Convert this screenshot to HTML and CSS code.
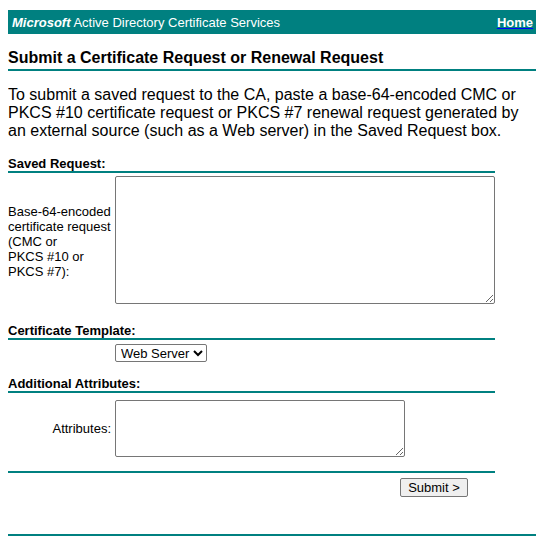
FILE: index.html
```html
<!DOCTYPE html>
<html>
<head>
<meta charset="utf-8">
<link rel="stylesheet" href="styles.css">
</head>
<body>
<div class="topbar">
  <span class="brand"><b><i>Microsoft</i></b> Active Directory Certificate Services</span>
  <a class="home" href="#"><span>Home</span></a>
</div>
<h1 class="title">Submit a Certificate Request or Renewal Request</h1>
<p class="intro">To submit a saved request to the CA, paste a base-64-encoded CMC or PKCS #10 certificate request or PKCS #7 renewal request generated by an external source (such as a Web server) in the Saved Request box.</p>
<form class="req">
  <div class="section s-saved">Saved Request:</div>
  <div class="row row-big">
    <label class="lbl lbl-big">Base-64-encoded<br>certificate request<br>(CMC or<br>PKCS #10 or<br>PKCS #7):</label>
    <textarea class="ta ta-big"></textarea>
  </div>
  <div class="section s-tpl">Certificate Template:</div>
  <div class="row row-sel">
    <span class="lbl"></span>
    <select class="sel"><option>Web Server</option></select>
  </div>
  <div class="section s-attr">Additional Attributes:</div>
  <div class="row row-attr">
    <label class="lbl lbl-right">Attributes:</label>
    <textarea class="ta ta-small"></textarea>
  </div>
  <div class="rule"></div>
  <div class="actions"><button type="button" class="btn">Submit &gt;</button></div>
</form>
<div class="rule-full"></div>
</body>
</html>
```
FILE: styles.css
```css
html, body {
  background: #ffffff;
}
body {
  margin: 10px 8px 8px 8px;
  font-family: "Liberation Sans", Arial, sans-serif;
  color: #000;
}
.topbar {
  height: 24px;
  background: #008080;
  display: flex;
  align-items: center;
  justify-content: space-between;
  padding: 0 3px 0 4px;
  font-size: 13px;
  color: #fff;
}
.home {
  color: #0000ff;
  font-weight: bold;
  text-decoration: underline;
  text-decoration-color: #0000ff;
}
.home span {
  color: #fff;
}
.title {
  margin: 15px 0 0 0;
  font-size: 16px;
  line-height: 18px;
  font-weight: bold;
  padding-bottom: 2px;
  border-bottom: 2px solid #008080;
}
.intro {
  margin: 15px 0 0 0;
  font-size: 16px;
  line-height: 18px;
}
.req {
  width: 487px;
  font-size: 13px;
}
.section {
  font-weight: bold;
  line-height: 15px;
  border-bottom: 2px solid #008080;
}
.s-saved { margin-top: 16px; }
.s-tpl { margin-top: 19px; }
.s-attr { margin-top: 14px; }
.row {
  display: flex;
  align-items: center;
}
.row-big { margin-top: 3px; }
.row-sel { margin-top: 4px; }
.row-attr { margin-top: 7px; }
.lbl {
  width: 107px;
  flex: none;
  line-height: 15px;
  box-sizing: border-box;
}
.lbl-big {
  padding-top: 3px;
}
.lbl-right {
  text-align: right;
  padding-right: 4px;
}
.ta {
  box-sizing: border-box;
  border: 1px solid #767676;
  border-radius: 2px;
  margin: 0;
  font-family: "Liberation Mono", monospace;
  font-size: 13px;
  background: #fff;
}
.ta-big {
  width: 380px;
  height: 128px;
}
.ta-small {
  width: 290px;
  height: 57px;
}
.sel {
  box-sizing: border-box;
  width: 92px;
  height: 18px;
  margin: 0;
  font-family: "Liberation Sans", Arial, sans-serif;
  font-size: 13px;
  border: 1px solid #767676;
  border-radius: 2px;
  background: #fff;
  color: #000;
  padding: 0 0 0 1px;
}
.rule {
  margin-top: 14px;
  height: 2px;
  background: #008080;
}
.actions {
  padding-top: 5px;
  padding-left: 392px;
}
.btn {
  box-sizing: border-box;
  width: 68px;
  height: 19px;
  margin: 0;
  padding: 0 6px;
  font-family: "Liberation Sans", Arial, sans-serif;
  font-size: 13px;
  border: 1px solid #767676;
  border-radius: 2px;
  background: #efefef;
  color: #000;
}
.rule-full {
  margin-top: 37px;
  height: 2px;
  background: #008080;
}
```
